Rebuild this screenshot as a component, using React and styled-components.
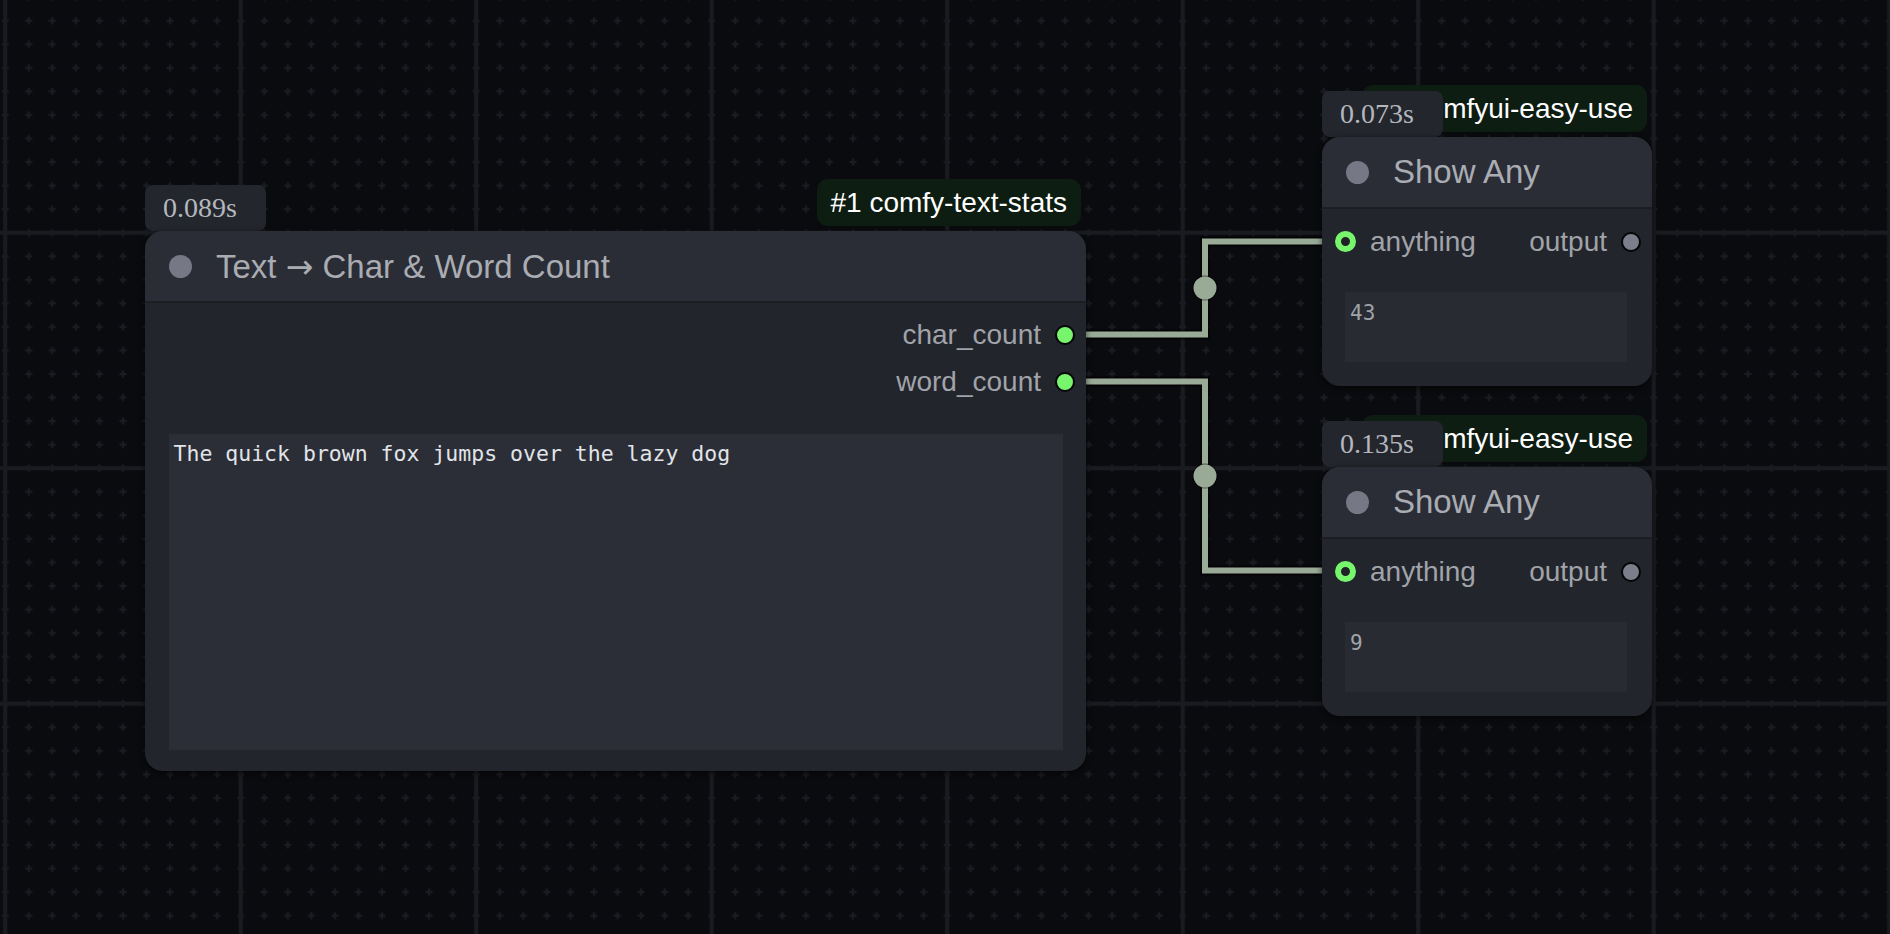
import styled, { createGlobalStyle } from "styled-components";

const GlobalStyle = createGlobalStyle`
  html, body {
    margin: 0;
    padding: 0;
    background: #0a0b0e;
    overflow: hidden;
  }
  body {
    font-family: "Liberation Sans", Arial, sans-serif;
  }
`;

const Canvas = styled.div`
  position: relative;
  width: 1890px;
  height: 934px;
  overflow: hidden;
  background: #0a0b0e;
`;

const Layer = styled.svg`
  position: absolute;
  left: 0;
  top: 0;
`;

// node + its badge/tag header, placed on the canvas
const NodeWrap = styled.div`
  position: absolute;
  left: ${(p) => p.$x}px;
  top: ${(p) => p.$y - 52}px;
  width: ${(p) => p.$w}px;
  display: flex;
  flex-direction: column;
`;

const Header = styled.div`
  display: grid;
  height: 52px;
`;

const Tag = styled.div`
  grid-area: 1 / 1;
  justify-self: end;
  align-self: start;
  margin-right: 5px;
  height: 47px;
  line-height: 47px;
  padding: 0 14px 0 13px;
  border-radius: 11px;
  background: #0e1d11;
  color: #ffffff;
  font-size: 28px;
  white-space: nowrap;
`;

const Badge = styled.div`
  grid-area: 1 / 1;
  justify-self: start;
  align-self: end;
  width: 121px;
  height: 46px;
  line-height: 46px;
  box-sizing: border-box;
  padding-left: 18px;
  border-radius: 8px;
  background: #24262d;
  color: #b4b7bd;
  font-family: "Liberation Serif", "Times New Roman", serif;
  font-size: 28px;
`;

const Node = styled.div`
  height: ${(p) => p.$h}px;
  background: #23252c;
  border-radius: 18px;
  overflow: hidden;
  box-shadow: 0 2px 6px rgba(0, 0, 0, 0.6);
  display: flex;
  flex-direction: column;
`;

const Title = styled.div`
  height: 70px;
  flex: none;
  display: flex;
  align-items: center;
  gap: 24px;
  padding-left: 24px;
  background: #2a2d35;
  border-bottom: 2px solid #1c1e23;
  color: #a9acb3;
  font-size: 33px;
  white-space: nowrap;
`;

const Arrow = styled.span`
  font-family: "DejaVu Sans", sans-serif;
  font-weight: 400;
`;

const TitleDot = styled.span`
  width: 23px;
  height: 23px;
  border-radius: 50%;
  background: #767985;
  flex: none;
`;

const Slots = styled.div`
  padding-top: ${(p) => p.$top}px;
  display: flex;
  flex-direction: column;
`;

const SlotRow = styled.div`
  height: 47px;
  display: flex;
  align-items: center;
  justify-content: ${(p) => (p.$end ? "flex-end" : "space-between")};
  padding: 0 11px 0 13px;
  color: #a0a3a9;
  font-size: 28px;
`;

const SlotSide = styled.div`
  display: flex;
  align-items: center;
  gap: 14px;
`;

const Dot = styled.span`
  width: 20px;
  height: 20px;
  box-sizing: border-box;
  border-radius: 50%;
  flex: none;
  background: ${(p) => p.$fill};
  border: 2px solid #050506;
`;

const Ring = styled.span`
  width: 21px;
  height: 21px;
  box-sizing: border-box;
  border-radius: 50%;
  flex: none;
  background: #1f2127;
  border: 6.5px solid #77f56c;
`;

const TextArea = styled.div`
  flex: 1;
  margin: 29px 23px 21px 23.5px;
  padding: 7px 6px 7px 5px;
  background: #2b2e36;
  color: #e1e4e9;
  font-family: "DejaVu Sans Mono", "Liberation Mono", monospace;
  font-size: 21.5px;
  white-space: pre;
`;

const ValueBox = styled.div`
  height: 70px;
  margin: 27px 25px 24px 23px;
  box-sizing: border-box;
  padding: 9px 5px;
  background: #292b32;
  color: #a0a3aa;
  font-family: "DejaVu Sans Mono", "Liberation Mono", monospace;
  font-size: 21px;
`;

const MAJOR = 235.5;
const MINOR = MAJOR / 10;
const OX = 5.2;
const OY = -2.8;
const LINK = "#99aa97";

const Grid = () => (
  <Layer width="1890" height="934">
    <defs>
      <pattern
        id="minor"
        patternUnits="userSpaceOnUse"
        width={MINOR}
        height={MINOR}
        x={OX - MINOR / 2}
        y={OY - MINOR / 2}
      >
        <rect x={MINOR / 2 - 3.5} y={MINOR / 2 - 1.1} width="7" height="2.2" fill="#1a1c22" />
        <rect x={MINOR / 2 - 1.1} y={MINOR / 2 - 3.5} width="2.2" height="7" fill="#1a1c22" />
      </pattern>
      <pattern
        id="major"
        patternUnits="userSpaceOnUse"
        width={MAJOR}
        height={MAJOR}
        x={OX - MAJOR / 2}
        y={OY - MAJOR / 2}
      >
        <rect x={MAJOR / 2 - 2} y="0" width="4" height={MAJOR} fill="#191b20" />
        <rect x="0" y={MAJOR / 2 - 2} width={MAJOR} height="4" fill="#191b20" />
      </pattern>
    </defs>
    <rect width="1890" height="934" fill="url(#minor)" />
    <rect width="1890" height="934" fill="url(#major)" />
  </Layer>
);

const links = [
  { d: "M1070 334.5 H1205 V241.5 H1340", cy: 288 },
  { d: "M1070 381.5 H1205 V570.5 H1340", cy: 476 },
];

const Links = () => (
  <Layer width="1890" height="934">
    {links.map((l, i) => (
      <g key={i}>
        <path d={l.d} fill="none" stroke="rgba(0,0,0,0.55)" strokeWidth="10" strokeLinejoin="miter" />
        <path d={l.d} fill="none" stroke={LINK} strokeWidth="6" strokeLinejoin="miter" />
        <circle cx="1205" cy={l.cy} r="12.5" fill="rgba(0,0,0,0.5)" />
        <circle cx="1205" cy={l.cy} r="11.5" fill={LINK} />
      </g>
    ))}
  </Layer>
);

const ShowAny = ({ y, time, tag, value }) => (
  <NodeWrap $x={1322} $y={y} $w={330}>
    <Header>
      <Tag>{tag}</Tag>
      <Badge>{time}</Badge>
    </Header>
    <Node $h={249}>
      <Title>
        <TitleDot />
        Show Any
      </Title>
      <Slots $top={9}>
        <SlotRow>
          <SlotSide>
            <Ring />
            anything
          </SlotSide>
          <SlotSide>
            output
            <Dot $fill="#7d7e8b" />
          </SlotSide>
        </SlotRow>
      </Slots>
      <ValueBox>{value}</ValueBox>
    </Node>
  </NodeWrap>
);

export default function App() {
  return (
    <>
      <GlobalStyle />
      <Canvas>
        <Grid />
        <Links />

        <NodeWrap $x={145} $y={231} $w={941}>
          <Header>
            <Tag>#1 comfy-text-stats</Tag>
            <Badge>0.089s</Badge>
          </Header>
          <Node $h={540}>
            <Title>
              <TitleDot />
              <span>
                Text <Arrow>→</Arrow> Char &amp; Word Count
              </span>
            </Title>
            <Slots $top={8}>
              <SlotRow $end>
                <SlotSide>
                  char_count
                  <Dot $fill="#77f56c" />
                </SlotSide>
              </SlotRow>
              <SlotRow $end>
                <SlotSide>
                  word_count
                  <Dot $fill="#77f56c" />
                </SlotSide>
              </SlotRow>
            </Slots>
            <TextArea>The quick brown fox jumps over the lazy dog</TextArea>
          </Node>
        </NodeWrap>

        <ShowAny y={137} time="0.073s" tag="#2 comfyui-easy-use" value="43" />
        <ShowAny y={467} time="0.135s" tag="#3 comfyui-easy-use" value="9" />
      </Canvas>
    </>
  );
}
